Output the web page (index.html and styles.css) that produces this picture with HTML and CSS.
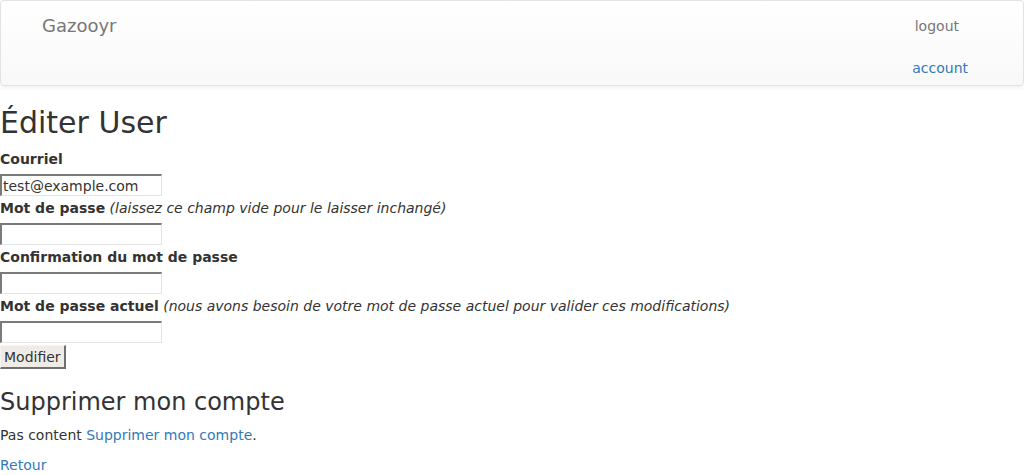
FILE: index.html
```html
<!DOCTYPE html>
<html lang="fr">
<head>
<meta charset="utf-8">
<title>Gazooyr</title>
<link rel="stylesheet" href="styles.css">
</head>
<body>
<nav class="navbar">
  <div class="container">
    <a class="brand" href="#">Gazooyr</a>
    <div class="nav-right">
      <a class="nav-link" href="#">logout</a>
      <a class="nav-account" href="#">account</a>
    </div>
  </div>
</nav>

<h2 class="title">Éditer User</h2>

<form class="user-form">
  <div class="field">
    <label class="lbl">Courriel</label>
    <input class="txt" type="email" value="test@example.com">
  </div>
  <div class="field">
    <label class="lbl">Mot de passe</label> <i class="hint">(laissez ce champ vide pour le laisser inchangé)</i>
    <input class="txt" type="password">
  </div>
  <div class="field">
    <label class="lbl">Confirmation du mot de passe</label>
    <input class="txt" type="password">
  </div>
  <div class="field">
    <label class="lbl">Mot de passe actuel</label> <i class="hint">(nous avons besoin de votre mot de passe actuel pour valider ces modifications)</i>
    <input class="txt" type="password">
  </div>
  <button class="btn" type="submit">Modifier</button>
</form>

<h3 class="subtitle">Supprimer mon compte</h3>
<p class="para">Pas content <a class="link" href="#">Supprimer mon compte</a>.</p>
<a class="link" href="#">Retour</a>
</body>
</html>
```

FILE: styles.css
```css
html, body {
  margin: 0;
  padding: 0;
}
body {
  font-family: "DejaVu Sans", sans-serif;
  font-size: 14px;
  line-height: 20px;
  color: #333;
  background: #fff;
}
a {
  text-decoration: none;
}
.navbar {
  height: 84px;
  border: 1px solid #e3e3e3;
  border-radius: 4px;
  background: linear-gradient(to bottom, #fff 0, #f8f8f8 100%);
  box-shadow: 0 1px 5px rgba(0, 0, 0, .075);
  margin-bottom: 20px;
}
.container {
  width: 970px;
  margin: 0 auto;
  padding: 0 15px;
  box-sizing: border-box;
  display: flex;
  justify-content: space-between;
}
.brand {
  font-size: 18px;
  line-height: 20px;
  padding: 15px 0;
  color: #777;
}
.nav-right {
  display: flex;
  flex-direction: column;
  align-items: flex-end;
  margin-right: -15px;
}
.nav-link {
  color: #777;
  padding: 15px 38px 15px 15px;
}
.nav-account {
  color: #337ab7;
  margin-top: 7px;
  padding-right: 29px;
}
.title {
  font-size: 30px;
  font-weight: normal;
  line-height: 33px;
  margin: 20px 0 10px;
}
.user-form {
  margin: 0;
}
.field {
  margin: 0;
}
.lbl {
  display: inline-block;
  font-weight: bold;
  margin-bottom: 5px;
}
.hint {
  font-style: italic;
}
.txt {
  display: block;
  box-sizing: border-box;
  width: 162px;
  height: 22px;
  margin: 0 0 2px;
  padding: 1px 1px;
  font-family: "DejaVu Sans", sans-serif;
  font-size: 14px;
  color: #333;
  background: #fff;
  border-style: solid;
  border-width: 2px 1px 1px 2px;
  border-color: #7a7a7a #e4e4e4 #e4e4e4 #7a7a7a;
  outline: none;
}
.btn {
  display: block;
  margin: 0;
  height: 24px;
  padding: 0 3px;
  font-family: "DejaVu Sans", sans-serif;
  font-size: 14px;
  line-height: 18px;
  color: #333;
  background: #efece8;
  border-style: solid;
  border-width: 1px 2px 2px 1px;
  border-color: #f4f4f4 #6f6f6f #6f6f6f #f4f4f4;
}
.subtitle {
  font-size: 24px;
  font-weight: normal;
  line-height: 26px;
  margin: 20px 0 10px;
}
.para {
  margin: 0 0 10px;
}
.link {
  color: #337ab7;
}
```
